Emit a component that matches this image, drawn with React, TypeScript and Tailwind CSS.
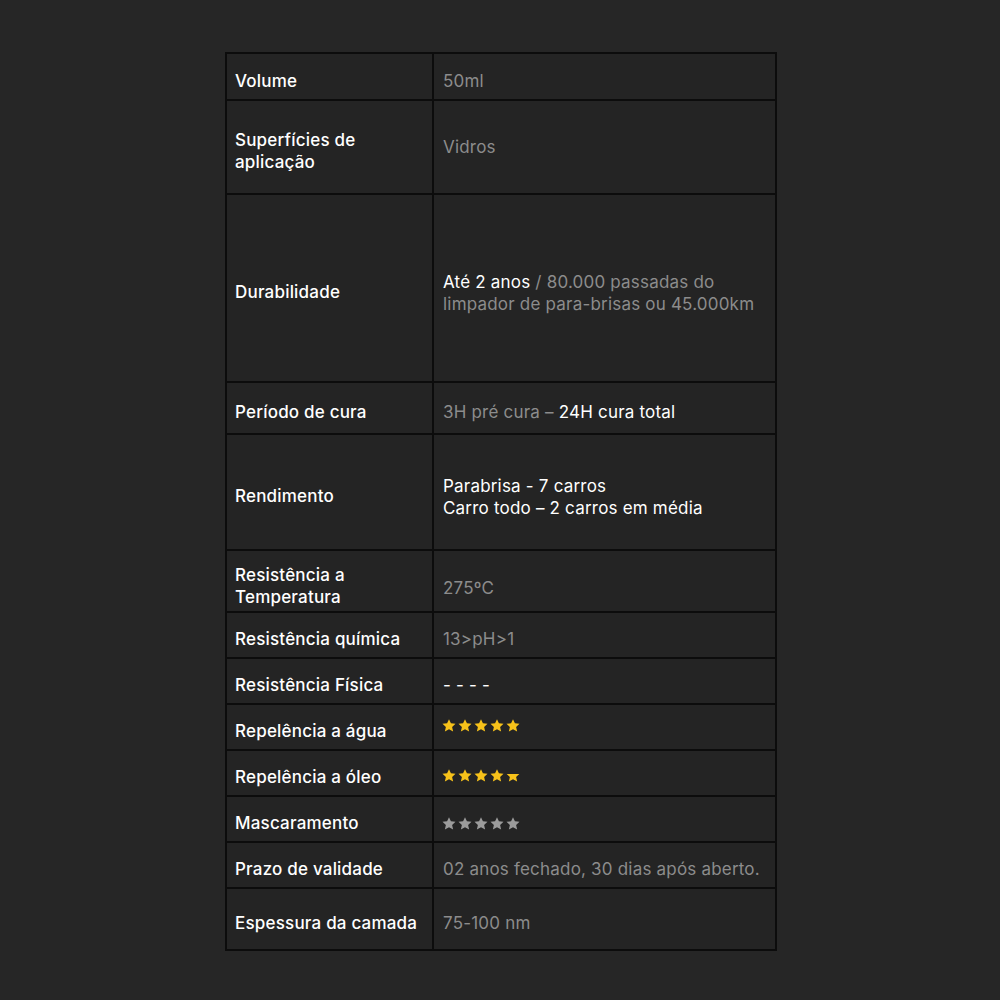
import type { ReactNode } from "react";

type Row = {
  label: ReactNode;
  value: ReactNode;
  h: string;
};

function Star({ color, clip = false }: { color: string; clip?: boolean }) {
  return (
    <svg width="14" height="13" viewBox="0 0 24 23" className="shrink-0">
      {clip && (
        <defs>
          <clipPath id="halfstar">
            <rect x="0" y="9" width="24" height="14" />
          </clipPath>
        </defs>
      )}
      <path
        d="M12 0.5l3.4 7.2 8.1 0.9-6 5.4 1.8 8L12 18l-7.3 4 1.8-8-6-5.4 8.1-0.9z"
        fill={color}
        clipPath={clip ? "url(#halfstar)" : undefined}
      />
    </svg>
  );
}

function Stars({ color, half = false, className = "" }: { color: string; half?: boolean; className?: string }) {
  return (
    <div className={`flex items-center gap-[2px] -ml-[1px] ${className}`}>
      <Star color={color} />
      <Star color={color} />
      <Star color={color} />
      <Star color={color} />
      <Star color={color} clip={half} />
    </div>
  );
}

const muted = "text-[#8c8c8c]";

const rows: Row[] = [
  { label: "Volume", value: <span className={muted}>50ml</span>, h: "h-[45px]" },
  {
    label: (
      <>
        Superfícies de
        <br />
        aplicação
      </>
    ),
    value: <span className={`${muted} -mt-[9px]`}>Vidros</span>,
    h: "h-[92px]",
  },
  {
    label: "Durabilidade",
    value: (
      <span className={`${muted} pt-[1px]`}>
        <span className="text-white">Até 2 anos</span> / 80.000 passadas do
        <br />
        limpador de para-brisas ou 45.000km
      </span>
    ),
    h: "h-[186px]",
  },
  {
    label: "Período de cura",
    value: (
      <span className={muted}>
        3H pré cura – <span className="text-white">24H cura total</span>
      </span>
    ),
    h: "h-[50px]",
  },
  {
    label: "Rendimento",
    value: (
      <span className="text-white pt-[1px]">
        Parabrisa - 7 carros
        <br />
        Carro todo – 2 carros em média
      </span>
    ),
    h: "h-[114px]",
  },
  {
    label: (
      <span className="block pt-[1px]">
        Resistência a
        <br />
        Temperatura
      </span>
    ),
    value: <span className={`${muted} pt-[5px]`}>275ºC</span>,
    h: "h-[60px]",
  },
  { label: "Resistência química", value: <span className={muted}>13&gt;pH&gt;1</span>, h: "h-[44px]" },
  { label: "Resistência Física", value: <span className="text-white">- - - -</span>, h: "h-[44px]" },
  { label: "Repelência a água", value: <Stars color="#f7c21a" className="-mt-[12px]" />, h: "h-[44px]" },
  { label: "Repelência a óleo", value: <Stars color="#f7c21a" half className="-mt-[4px]" />, h: "h-[44px]" },
  { label: "Mascaramento", value: <Stars color="#9b9b9b" />, h: "h-[44px]" },
  {
    label: "Prazo de validade",
    value: <span className={muted}>02 anos fechado, 30 dias após aberto.</span>,
    h: "h-[44px]",
  },
  { label: "Espessura da camada", value: <span className={muted}>75-100 nm</span>, h: "h-[60px]" },
];

export default function App() {
  return (
    <div
      className="min-h-screen w-full bg-[#262626] pt-[52px]"
      style={{ fontFamily: "Inter, sans-serif" }}
    >
      {/* Spec table */}
      <div className="ml-[225px] w-[552px] bg-[#0c0c0c] p-[2px] flex flex-col gap-[2px]">
        {rows.map((row, i) => (
          <div key={i} className={`grid grid-cols-[205px_1fr] gap-[2px] ${row.h}`}>
            <div className="bg-[#242424] flex items-center pl-[8px] pr-2 pt-[8px] text-[17px] leading-[22px] font-medium text-white tracking-[0.2px]">
              <span>{row.label}</span>
            </div>
            <div className="bg-[#242424] flex items-center pl-[9px] pr-2 pt-[8px] text-[17px] leading-[22px] tracking-[0.2px]">
              {row.value}
            </div>
          </div>
        ))}
      </div>
    </div>
  );
}
